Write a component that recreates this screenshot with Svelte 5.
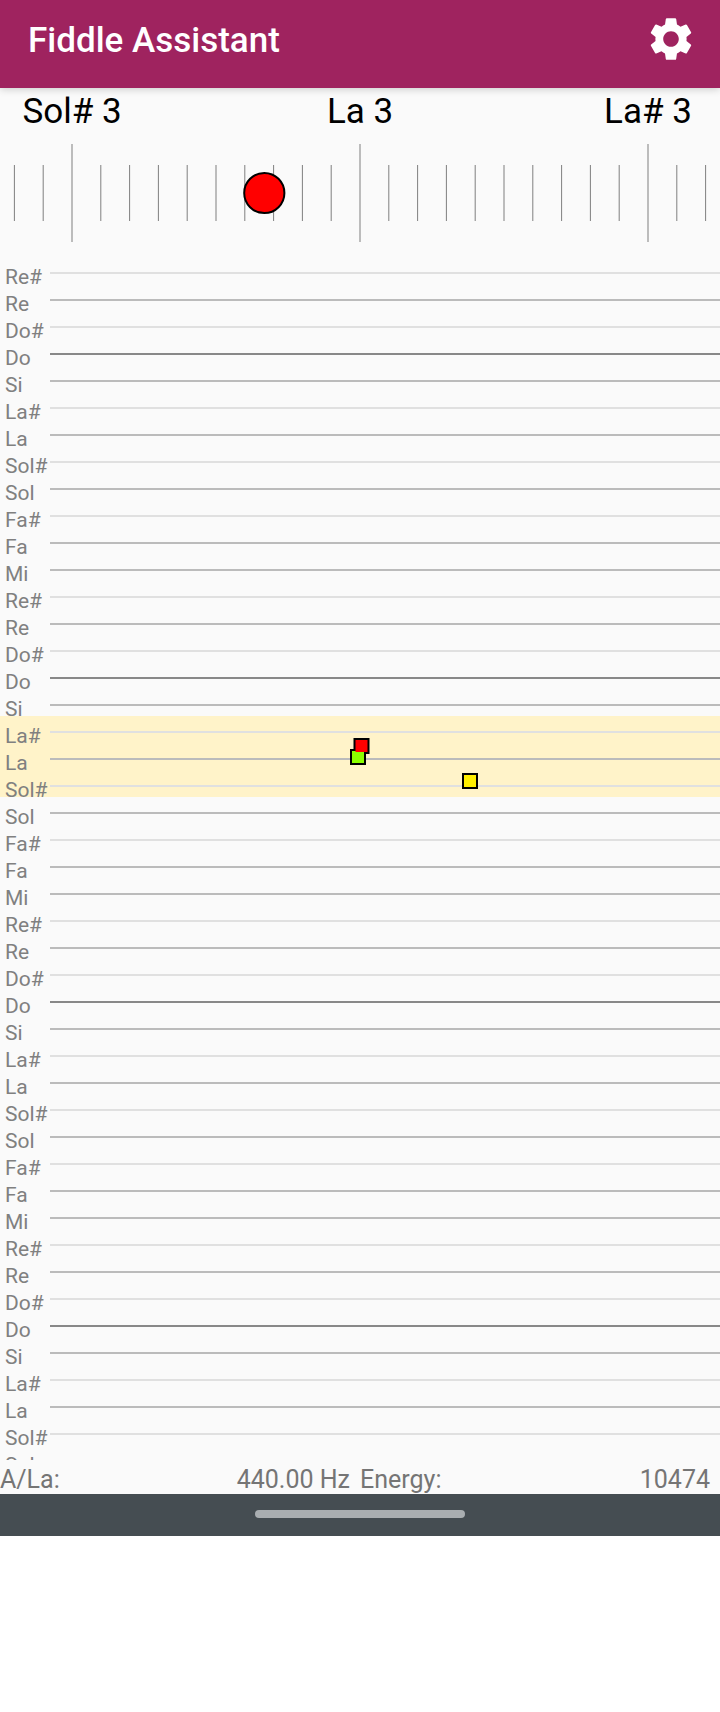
<script>
  const colors = { natural: '#bbbbbb', sharp: '#e0e0e0', octave: '#888888' };
  const scale = ['Re#', 'Re', 'Do#', 'Do', 'Si', 'La#', 'La', 'Sol#', 'Sol', 'Fa#', 'Fa', 'Mi'];
  const rows = Array.from({ length: 45 }, (_, i) => {
    const name = scale[i % 12];
    const kind = name === 'Do' ? 'octave' : name.endsWith('#') ? 'sharp' : 'natural';
    return { name, color: colors[kind], active: i >= 17 && i <= 19 };
  });
  const ticks = Array.from({ length: 25 }, (_, i) => ({ x: 14.4 + 28.8 * i, major: i % 10 === 2 }));
  const points = [
    { x: 350, y: 497, color: '#8cff00' },
    { x: 353.5, y: 486, color: '#ff0000' },
    { x: 462, y: 521, color: '#ffee00' }
  ];
</script>

<div class="screen">
  <header>
    <h1>Fiddle Assistant</h1>
    <svg class="gear" viewBox="0 0 24 24" aria-hidden="true">
      <path d="M19.14 12.94c.04-.3.06-.61.06-.94 0-.32-.02-.64-.07-.94l2.03-1.58c.18-.14.23-.41.12-.61l-1.92-3.32c-.12-.22-.37-.29-.59-.22l-2.39.96c-.5-.38-1.03-.7-1.62-.94l-.36-2.54c-.04-.24-.24-.41-.48-.41h-3.84c-.24 0-.43.17-.47.41l-.36 2.54c-.59.24-1.13.57-1.62.94l-2.39-.96c-.22-.08-.47 0-.59.22L2.74 8.87c-.12.21-.08.47.12.61l2.03 1.58c-.05.3-.09.63-.09.94s.02.64.07.94l-2.03 1.58c-.18.14-.23.41-.12.61l1.92 3.32c.12.22.37.29.59.22l2.39-.96c.5.38 1.03.7 1.62.94l.36 2.54c.05.24.24.41.48.41h3.84c.24 0 .44-.17.47-.41l.36-2.54c.59-.24 1.13-.56 1.62-.94l2.39.96c.22.08.47 0 .59-.22l1.92-3.32c.12-.22.07-.47-.12-.61l-2.01-1.58zM12 15.6c-1.98 0-3.6-1.62-3.6-3.6s1.62-3.6 3.6-3.6 3.6 1.62 3.6 3.6-1.62 3.6-3.6 3.6z" />
    </svg>
  </header>

  <section class="tuner">
    <div class="notes"><span>Sol# 3</span><span>La 3</span><span>La# 3</span></div>
    <svg class="ruler" viewBox="0 0 720 117" aria-hidden="true">
      {#each ticks as t}
        <line x1={t.x} x2={t.x} y1={t.major ? 9 : 30} y2={t.major ? 107 : 86} stroke="#7f7f7f" stroke-width="1" />
      {/each}
      <circle cx="264.3" cy="58" r="20.1" fill="#ff0000" stroke="#000" stroke-width="2" />
    </svg>
  </section>

  <section class="roll">
    {#each rows as r}
      <div class="row" class:active={r.active}>
        <span class="name">{r.name}</span>
        <i style="background: {r.color}"></i>
      </div>
    {/each}
    <svg class="points" viewBox="0 0 720 1208" aria-hidden="true">
      {#each points as p}
        <rect x={p.x} y={p.y} width="16" height="16" fill="#000" />
      {/each}
      {#each points as p}
        <rect x={p.x + 2} y={p.y + 2} width="12" height="12" fill={p.color} />
      {/each}
    </svg>
  </section>

  <footer>
    <span>A/La:</span><span class="value">440.00 Hz</span>
    <span>Energy:</span><span class="value">10474</span>
  </footer>
  <nav><div class="pill"></div></nav>
</div>

<style>
  :global(body) { background: #fff; }
  .screen {
    width: 720px;
    height: 1536px;
    display: flex;
    flex-direction: column;
    overflow: hidden;
    background: #fafafa;
    font-family: Roboto, sans-serif;
  }
  header {
    height: 88px;
    flex: none;
    box-sizing: border-box;
    display: flex;
    justify-content: space-between;
    align-items: flex-start;
    padding: 13px 23px 0 28px;
    background: #9f235f;
    color: #fff;
    box-shadow: 0 1px 8px rgba(0, 0, 0, 0.2);
    z-index: 1;
  }
  h1 { margin: 6px 0 0; font-size: 35px; line-height: 44px; font-weight: 500; }
  .gear { width: 52px; height: 52px; fill: #fff; }
  .tuner { flex: none; height: 164px; }
  .notes {
    height: 47px;
    display: grid;
    grid-template-columns: repeat(3, 288px);
    margin-left: -72px;
    text-align: center;
    font-size: 35px;
    line-height: 48px;
    color: #000;
  }
  .ruler { display: block; width: 720px; height: 117px; }
  .roll { position: relative; flex: none; height: 1208px; overflow: hidden; box-sizing: border-box; padding-top: 5px; }
  .row { height: 27px; display: grid; grid-template-columns: 50px 1fr; }
  .row.active { background: #fff3c9; }
  .name { padding: 7px 0 0 5px; font-size: 21px; line-height: 27px; color: #808080; white-space: nowrap; position: relative; }
  .row i { height: 2px; margin-top: 15px; }
  .points { position: absolute; left: 0; top: 0; width: 720px; height: 1208px; }
  footer {
    flex: none;
    height: 34px;
    display: grid;
    grid-template-columns: repeat(4, 180px);
    font-size: 25px;
    line-height: 40px;
    color: #757575;
    white-space: nowrap;
  }
  .value { text-align: right; padding-right: 10px; }
  nav { flex: none; height: 42px; display: flex; justify-content: center; background: #454d52; }
  .pill { width: 210px; height: 8px; margin-top: 16px; border-radius: 4px; background: #a9aeb1; }
</style>
